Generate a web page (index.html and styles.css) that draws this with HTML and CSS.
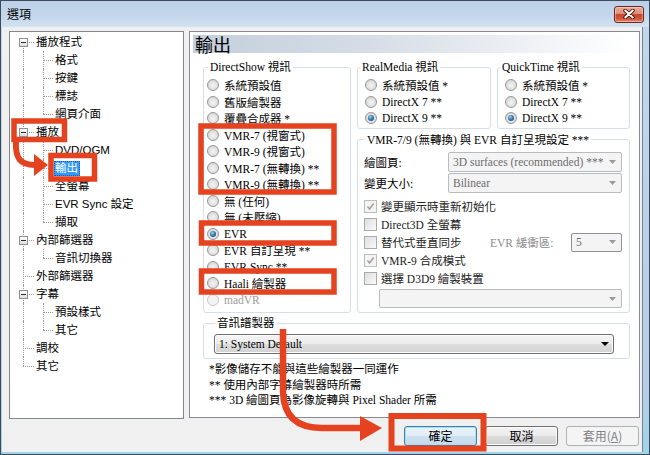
FILE: index.html
```html
<!DOCTYPE html>
<html lang="zh-Hant">
<head>
<meta charset="utf-8">
<title>選項</title>
<link rel="stylesheet" href="styles.css">
</head>
<body>
<div class="window">
  <div class="titlebar">
    <span class="title">選項</span>
    <span class="close"><svg width="12" height="10" viewBox="0 0 12 10"><path d="M2.2 1.6L9.8 8.4M9.8 1.6L2.2 8.4" stroke="#4a1208" stroke-width="3.8" stroke-linecap="round"/><path d="M2.2 1.6L9.8 8.4M9.8 1.6L2.2 8.4" stroke="#fff" stroke-width="2" stroke-linecap="round"/></svg></span>
  </div>
  <div class="client">
    <div class="main">
      <div class="tree">
        <div class="row"><span class="c0 v first h"><i class="box"></i></span><span class="t">播放程式</span></div>
        <div class="row"><span class="c0 v"></span><span class="c1 v h"></span><span class="t">格式</span></div>
        <div class="row"><span class="c0 v"></span><span class="c1 v h"></span><span class="t">按鍵</span></div>
        <div class="row"><span class="c0 v"></span><span class="c1 v h"></span><span class="t">標誌</span></div>
        <div class="row"><span class="c0 v"></span><span class="c1 v h last"></span><span class="t">網頁介面</span></div>
        <div class="row"><span class="c0 v h"><i class="box"></i></span><span class="t">播放</span></div>
        <div class="row"><span class="c0 v"></span><span class="c1 v h"></span><span class="t">DVD/OGM</span></div>
        <div class="row"><span class="c0 v"></span><span class="c1 v h"></span><span class="t sel">輸出</span></div>
        <div class="row"><span class="c0 v"></span><span class="c1 v h"></span><span class="t">全螢幕</span></div>
        <div class="row"><span class="c0 v"></span><span class="c1 v h"></span><span class="t">EVR Sync 設定</span></div>
        <div class="row"><span class="c0 v"></span><span class="c1 v h last"></span><span class="t">擷取</span></div>
        <div class="row"><span class="c0 v h"><i class="box"></i></span><span class="t">內部篩選器</span></div>
        <div class="row"><span class="c0 v"></span><span class="c1 v h last"></span><span class="t">音訊切換器</span></div>
        <div class="row"><span class="c0 v h"></span><span class="t">外部篩選器</span></div>
        <div class="row"><span class="c0 v h"><i class="box"></i></span><span class="t">字幕</span></div>
        <div class="row"><span class="c0 v"></span><span class="c1 v h"></span><span class="t">預設樣式</span></div>
        <div class="row"><span class="c0 v"></span><span class="c1 v h last"></span><span class="t">其它</span></div>
        <div class="row"><span class="c0 v h"></span><span class="t">調校</span></div>
        <div class="row"><span class="c0 v h last"></span><span class="t">其它</span></div>
      </div>
      <div class="page">
        <div class="pagehead">輸出</div>
        <div class="pagebody">
          <fieldset class="grp ds">
            <legend>DirectShow 視訊</legend>
            <div class="opt"><span class="radio"></span>系統預設值</div>
            <div class="opt"><span class="radio"></span>舊版繪製器</div>
            <div class="opt"><span class="radio"></span>覆疊合成器 *</div>
            <div class="opt"><span class="radio"></span>VMR-7 (視窗式)</div>
            <div class="opt"><span class="radio"></span>VMR-9 (視窗式)</div>
            <div class="opt"><span class="radio"></span>VMR-7 (無轉換) **</div>
            <div class="opt"><span class="radio"></span>VMR-9 (無轉換) **</div>
            <div class="opt"><span class="radio"></span>無 (任何)</div>
            <div class="opt"><span class="radio"></span>無 (未壓縮)</div>
            <div class="opt"><span class="radio on"></span>EVR</div>
            <div class="opt"><span class="radio"></span>EVR 自訂呈現 **</div>
            <div class="opt"><span class="radio"></span>EVR Sync **</div>
            <div class="opt"><span class="radio"></span>Haali 繪製器</div>
            <div class="opt dis"><span class="radio"></span>madVR</div>
          </fieldset>
          <div class="rightcol">
            <div class="pair">
              <fieldset class="grp rm">
                <legend>RealMedia 視訊</legend>
                <div class="opt"><span class="radio"></span>系統預設值 *</div>
                <div class="opt"><span class="radio"></span>DirectX 7 **</div>
                <div class="opt"><span class="radio on"></span>DirectX 9 **</div>
              </fieldset>
              <fieldset class="grp qt">
                <legend>QuickTime 視訊</legend>
                <div class="opt"><span class="radio"></span>系統預設值 *</div>
                <div class="opt"><span class="radio"></span>DirectX 7 **</div>
                <div class="opt"><span class="radio on"></span>DirectX 9 **</div>
              </fieldset>
            </div>
            <fieldset class="grp vmr">
              <legend>VMR-7/9 (無轉換) 與 EVR 自訂呈現設定 ***</legend>
              <div class="frow"><span class="flabel">繪圖頁:</span><span class="combo dis wide"><span>3D surfaces (recommended) ***</span><svg width="7" height="4" viewBox="0 0 7 4"><path d="M0 0H7L3.5 4Z" fill="#9a9a9a"/></svg></span></div>
              <div class="frow second"><span class="flabel">變更大小:</span><span class="combo dis wide"><span>Bilinear</span><svg width="7" height="4" viewBox="0 0 7 4"><path d="M0 0H7L3.5 4Z" fill="#9a9a9a"/></svg></span></div>
              <div class="crow first"><span class="chk on"><svg width="9" height="9" viewBox="0 0 9 9"><path d="M1.5 4.5L3.6 7L7.6 1.6" fill="none" stroke="#a2a2a2" stroke-width="1.6"/></svg></span>變更顯示時重新初始化</div>
              <div class="crow"><span class="chk"></span>Direct3D 全螢幕</div>
              <div class="crow"><span class="chk"></span>替代式垂直同步<span class="evr"><span class="evrlabel">EVR 緩衝區:</span><span class="combo small"><span>5</span><svg width="7" height="4" viewBox="0 0 7 4"><path d="M0 0H7L3.5 4Z" fill="#9a9a9a"/></svg></span></span></div>
              <div class="crow"><span class="chk on"><svg width="9" height="9" viewBox="0 0 9 9"><path d="M1.5 4.5L3.6 7L7.6 1.6" fill="none" stroke="#a2a2a2" stroke-width="1.6"/></svg></span>VMR-9 合成模式</div>
              <div class="crow"><span class="chk"></span>選擇 D3D9 繪製裝置</div>
              <span class="combo dis device"><span></span><svg width="7" height="4" viewBox="0 0 7 4"><path d="M0 0H7L3.5 4Z" fill="#9a9a9a"/></svg></span>
            </fieldset>
          </div>
          <fieldset class="grp audio">
            <legend>音訊譜製器</legend>
            <span class="combo live"><span>1: System Default</span><svg width="8" height="4" viewBox="0 0 8 4"><path d="M0 0H8L4 4Z" fill="#000"/></svg></span>
          </fieldset>
          <div class="notes">
            <div>*影像儲存不能與這些繪製器一同運作</div>
            <div>** 使用內部字幕繪製器時所需</div>
            <div>*** 3D 繪圖頁為影像旋轉與 Pixel Shader 所需</div>
          </div>
        </div>
      </div>
    </div>
    <div class="buttons">
      <span class="btn default">確定</span>
      <span class="btn">取消</span>
      <span class="btn disabled">套用(<u>A</u>)</span>
    </div>
  </div>
  <svg class="annot" width="650" height="455" viewBox="0 0 650 455">
    <g fill="none" stroke="#e5431f" stroke-width="5.5">
      <rect x="14" y="121" width="50.5" height="18.5"/>
      <rect x="51" y="155.5" width="43.5" height="23.5"/>
      <rect x="201" y="126" width="133" height="66"/>
      <rect x="201.5" y="223" width="132.5" height="20"/>
      <rect x="201.5" y="271" width="132.5" height="21"/>
      <rect x="391.5" y="416" width="92" height="32.5" stroke-width="6"/>
      <path d="M16 141 C15 158 20 165 35 165" stroke-width="6"/>
      <path d="M283 329 L283 392 Q284 428 322 428 L362 428" stroke-width="6.5"/>
    </g>
    <g fill="#e5431f">
      <polygon points="34,154 48,165 34,176"/>
      <polygon points="360,416 382,428 360,441"/>
    </g>
  </svg>
</div>
</body>
</html>
```
FILE: styles.css
```css
* { box-sizing: border-box; }
html, body { margin: 0; padding: 0; }
body {
  width: 650px;
  height: 455px;
  overflow: hidden;
  background: #fff;
  font-family: "Noto Sans CJK TC", sans-serif;
}
.window {
  position: relative;
  width: 650px;
  height: 455px;
  border: 1px solid #3d4a58;
  background: linear-gradient(#c2d6ec, #b8cee6 85%, #9fd4ea);
  display: flex;
  flex-direction: column;
}
.titlebar {
  height: 26px;
  flex: none;
  display: flex;
  align-items: center;
  justify-content: space-between;
  padding: 0 5px 0 6px;
  background: linear-gradient(#bcd1e9, #c3d6ec 55%, #d3e2f2);
}
.title {
  font-size: 12px;
  line-height: 16px;
  color: #000;
}
.close {
  width: 30px;
  height: 17px;
  border: 1px solid #6b2a1e;
  border-radius: 3px;
  background: linear-gradient(#e9aa9a 0, #de8f7c 45%, #c9472e 50%, #cf553b 78%, #e2906f 100%);
  box-shadow: inset 0 0 0 1px rgba(255,255,255,0.35);
  display: flex;
  align-items: center;
  justify-content: center;
}
.client {
  margin: 0 7px 2px 1px;
  height: 425px;
  background: #f0f0f0;
  padding: 4px 2px 0 7px;
  box-shadow: 1px 0 0 #71849a;
}
.main {
  display: flex;
  gap: 5px;
  align-items: flex-start;
  height: 388px;
}

/* Tree */
.tree {
  width: 175px;
  height: 388px;
  flex: none;
  border: 1px solid #828790;
  background: #fff;
  padding-top: 1px;
  font-family: "Liberation Sans", "Noto Sans CJK TC", sans-serif;
  font-size: 11.5px;
  color: #000;
}
.row {
  display: flex;
  align-items: center;
  height: 18px;
}
.c0, .c1 {
  position: relative;
  height: 18px;
  flex: none;
}
.c0 { width: 25px; }
.c1 { width: 19px; }
.v::before {
  content: "";
  position: absolute;
  left: 13px;
  top: 0;
  bottom: 0;
  border-left: 1px dotted #9a9a9a;
}
.c1.v::before { left: 8px; }
.v.first::before { top: 9px; }
.v.last::before { bottom: 9px; }
.h::after {
  content: "";
  position: absolute;
  left: 13px;
  width: 11px;
  top: 9px;
  border-top: 1px dotted #9a9a9a;
}
.c1.h::after { left: 8px; width: 10px; }
.box {
  position: absolute;
  left: 9px;
  top: 5px;
  width: 9px;
  height: 9px;
  border: 1px solid #8f8f8f;
  background: linear-gradient(#ffffff, #dfdfdf);
  z-index: 1;
  display: flex;
  align-items: center;
  justify-content: center;
}
.box::before {
  content: "";
  width: 5px;
  height: 1px;
  background: #2a2a2a;
}
.t {
  padding: 0 1px;
  line-height: 15px;
  white-space: nowrap;
}
.t.sel {
  background: #3399ff;
  color: #fff;
  outline: 1px dotted #1e5fa8;
  outline-offset: -1px;
  padding: 0 2px 0 1px;
}

/* Page */
.page {
  width: 451px;
  height: 387px;
  flex: none;
  border: 1px solid #898c95;
  background: #fff;
  font-family: "Liberation Serif", "Noto Sans CJK TC", serif;
  font-size: 11.5px;
  color: #000;
}
.pagehead {
  margin: 3px 3px 0 3px;
  height: 18px;
  padding-left: 2px;
  font-family: "Noto Sans CJK TC", sans-serif;
  font-size: 18px;
  line-height: 18px;
  background: linear-gradient(to right, #c4cfdb 0, #d6dde6 40%, #eef1f5 75%, #ffffff 98%);
}
.pagebody {
  display: grid;
  grid-template-columns: 148px 273px;
  column-gap: 6px;
  row-gap: 3px;
  padding: 7px 9px 0 13px;
  align-items: start;
}
.grp {
  margin: 0;
  min-width: 0;
  border: 1px solid #d5dfe5;
  border-radius: 3px;
  padding: 3px 3px 4px 3px;
}
.grp legend {
  padding: 0 2px;
  margin-left: 1px;
  line-height: 14px;
  white-space: nowrap;
}
.ds { grid-column: 1; grid-row: 1; }
.rightcol {
  grid-column: 2;
  grid-row: 1;
  display: flex;
  flex-direction: column;
  gap: 4px;
}
.pair { display: flex; gap: 6px; }
.rm { width: 134px; padding-bottom: 1px; padding-left: 7px; }
.qt { width: 133px; padding-bottom: 1px; padding-left: 7px; }
.rm legend, .qt legend { margin-left: -5px; }
.opt {
  display: flex;
  align-items: center;
  gap: 5px;
  height: 16.5px;
  white-space: nowrap;
}
.radio {
  width: 12px;
  height: 12px;
  flex: none;
  border-radius: 50%;
  border: 1px solid #979797;
  background: radial-gradient(circle at 50% 55%, #f4f4f4 0, #e4e4e4 45%, #cdcdcd 100%);
  display: flex;
  align-items: center;
  justify-content: center;
}
.radio.on::after {
  content: "";
  width: 6px;
  height: 6px;
  border-radius: 50%;
  background: radial-gradient(circle at 40% 35%, #a4dcf7 0, #3c83b5 40%, #0f3858 100%);
}
.opt.dis { color: #9d9d9d; }
.opt.dis .radio { border-color: #c8c8c8; background: #f3f3f3; }

.vmr { padding: 5px 7px 3.5px 6px; }
.frow {
  display: flex;
  align-items: center;
  height: 20px;
}
.frow.second { margin-top: 1px; }
.flabel { width: 84px; flex: none; white-space: nowrap; }
.combo {
  display: flex;
  align-items: center;
  justify-content: space-between;
  border: 1px solid #b9bcbf;
  border-radius: 2px;
  background: #f4f4f4;
  color: #6d6d6d;
  padding: 0 5px 0 4px;
  white-space: nowrap;
  flex: none;
}
.combo.wide { width: 174px; height: 20px; }
.combo.small { width: 51px; height: 19px; border-color: #8e9296; }
.combo.device { width: 243px; height: 19px; margin: 2px 0 0 15px; }
.crow {
  display: flex;
  align-items: center;
  gap: 4px;
  height: 18px;
  white-space: nowrap;
  color: #222;
}
.crow.first { margin-top: 4.5px; }
.chk {
  width: 13px;
  height: 13px;
  flex: none;
  border: 1px solid #a9a9a9;
  background: linear-gradient(135deg, #dedede, #fafafa);
  display: flex;
  align-items: center;
  justify-content: center;
}
.chk.on { border-color: #bcbcbc; background: #f4f4f4; }
.evr {
  margin-left: auto;
  display: flex;
  align-items: center;
}
.evrlabel { width: 81px; color: #8c8c8c; }

.audio {
  grid-column: 1 / 3;
  padding: 4px 15px 4px 10px;
}
.combo.live {
  width: 400px;
  height: 20px;
  border: 1px solid #707070;
  border-radius: 3px;
  color: #000;
  padding: 0 4px 0 4px;
  background: linear-gradient(#f4f4f4 0, #ececec 50%, #dedede 50%, #d2d2d2 100%);
  box-shadow: inset 0 0 0 1px #fbfbfb;
}
.notes {
  grid-column: 1 / 3;
  padding-left: 6px;
  line-height: 15.5px;
}

/* Buttons */
.buttons {
  display: flex;
  justify-content: flex-end;
  gap: 8px;
  margin-top: 7px;
  padding-right: 1px;
}
.btn {
  width: 73px;
  height: 20px;
  border: 1px solid #707070;
  border-radius: 3px;
  background: linear-gradient(#f2f2f2 0, #ebebeb 50%, #dddddd 50%, #cfcfcf 100%);
  box-shadow: inset 0 0 0 1px #fcfcfc;
  font-family: "Noto Sans CJK TC", sans-serif;
  font-size: 12px;
  line-height: 18px;
  text-align: center;
  color: #000;
}
.btn.default {
  border-color: #3c7fb1;
  background: linear-gradient(#eaf4fb 0, #e0ecf6 50%, #cfe1f0 50%, #c4d9ea 100%);
  box-shadow: inset 0 0 0 1px #a6e0f8;
}
.btn.disabled {
  border-color: #adb2b5;
  background: #f4f4f4;
  box-shadow: none;
  color: #838383;
}

.annot {
  position: absolute;
  left: -1px;
  top: -1px;
  pointer-events: none;
}
```
